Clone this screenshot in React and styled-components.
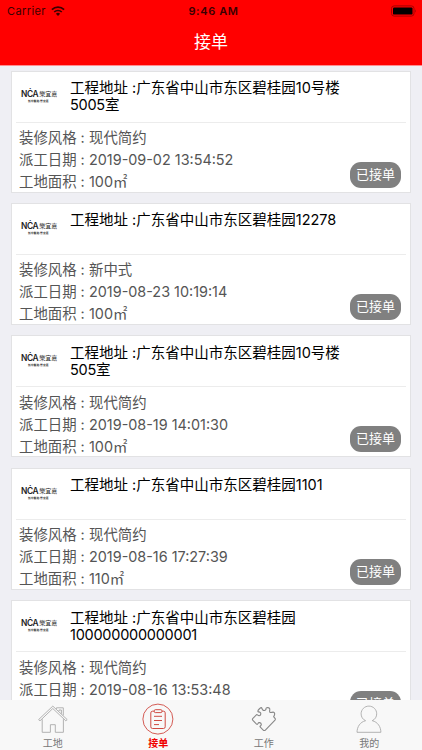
import React from 'react';
import styled, { createGlobalStyle } from 'styled-components';

const GlobalStyle = createGlobalStyle`
    * {
        box-sizing: border-box;
    }
    body {
        margin: 0;
        overflow: hidden;
        font-family: Inter, "Noto Sans CJK SC", sans-serif;
    }
`

const Screen = styled.div`
    display: flex;
    flex-direction: column;
    width: 422px;
    height: 750px;
    background: #efeff4;
`

const Header = styled.header`
    flex: none;
    height: 66px;
    background: #ff0000;
    border-bottom: 1px solid #ff8c8e;
`

const StatusBar = styled.div`
    display: grid;
    grid-template-columns: 1fr auto 1fr;
    align-items: center;
    height: 22px;
    padding: 0 5px 0 7px;
    font-size: 11px;
    line-height: 22px;
    color: #3a0000;
`

const Carrier = styled.div`
    display: flex;
    align-items: center;
    gap: 5px;
    letter-spacing: 0.4px;
`

const Time = styled.div`
    padding-left: 3px;
    font-weight: 600;
    letter-spacing: 0.6px;
`

const Battery = styled.div`
    display: flex;
    justify-content: flex-end;
`

const Title = styled.h1`
    margin: 0;
    padding-top: 1px;
    font-size: 17px;
    font-weight: 400;
    line-height: 38px;
    text-align: center;
    color: #fff;
`

const List = styled.main`
    display: flex;
    flex: 1;
    flex-direction: column;
    gap: 10.4px;
    min-height: 0;
    padding: 4.5px 11px 0;
    overflow: hidden;
`

const Card = styled.article`
    flex: none;
    width: 400px;
    height: 122px;
    padding: 0 4px;
    background: #fff;
    border: 1px solid #e2e2e4;
`

const CardTop = styled.div`
    display: flex;
    height: 51px;
    border-bottom: 1px solid #ececec;
`

const Logo = styled.div`
    flex: none;
    width: 54px;
    padding: 17px 0 0 5px;
`

const Brand = styled.div`
    display: flex;
    align-items: center;
    gap: 1px;
    height: 10px;
    color: #222;
    white-space: nowrap;
`

const BrandLatin = styled.span`
    font-size: 8.4px;
    font-weight: 600;
    line-height: 10px;
    letter-spacing: -0.4px;
`

const BrandName = styled.span`
    font-size: 6px;
    line-height: 10px;
`

const Slogan = styled.div`
    padding-left: 7px;
    font-size: 2.8px;
    font-weight: 700;
    line-height: 4px;
    color: #333;
    white-space: nowrap;
`

const Address = styled.div`
    padding-top: 7.5px;
    font-size: 14.5px;
    line-height: 17.2px;
    color: #000;
`

const AddressLine = styled.div`
    letter-spacing: ${(props) => (props.$dense ? '-0.25px' : 'normal')};
`

const CardBody = styled.div`
    display: flex;
    justify-content: space-between;
    padding: 4.5px 5px 0 3px;
`

const Info = styled.div`
    font-size: 14.4px;
    line-height: 22px;
    color: #555;
`

const InfoRow = styled.div`
    display: flex;
`

const Label = styled.span`
    width: 70px;
    white-space: pre;
`

const Status = styled.div`
    align-self: flex-end;
    width: 51px;
    height: 26px;
    margin-bottom: 5.5px;
    border-radius: 11px;
    background: #808080;
    font-size: 13px;
    line-height: 25px;
    text-align: center;
    color: #fff;
`

const TabBar = styled.nav`
    display: grid;
    flex: none;
    grid-template-columns: repeat(4, 1fr);
    height: 50px;
    background: #f8f8f8;
`

const Tab = styled.div`
    display: flex;
    flex-direction: column;
    align-items: center;
    padding-top: 3px;
    font-size: 10px;
    font-weight: ${(props) => (props.$active ? 700 : 400)};
    line-height: 16px;
    color: ${(props) => (props.$active ? '#f00000' : '#777')};
`

const WifiIcon = () => (
    <svg width="14" height="10" viewBox="0 0 14 10" fill="none">
        <path d="M0.9 3.6A8.9 8.9 0 0 1 13.1 3.6" stroke="#3a0000" strokeWidth="1.8"/>
        <path d="M3.2 6A5.6 5.6 0 0 1 10.8 6" stroke="#3a0000" strokeWidth="1.7"/>
        <path d="M7 9.9L4.9 7.8A3 3 0 0 1 9.1 7.8Z" fill="#3a0000"/>
    </svg>
)

const BatteryIcon = () => (
    <svg width="26" height="12" viewBox="0 0 26 12">
        <rect x="0.5" y="0.9" width="22.5" height="10.2" rx="2.6" fill="none" stroke="#a50000"/>
        <rect x="2" y="2.4" width="19.5" height="7.2" rx="1.2" fill="#000"/>
        <path d="M24.2 4.3Q25.6 6 24.2 7.7Z" fill="#900000"/>
    </svg>
)

const HouseIcon = () => (
    <svg width="32" height="32" viewBox="0 1 32 32" fill="none" stroke="#aaa" strokeWidth="0.9">
        <path d="M1.6 17.6L15.8 4.1L30.2 17.6L28.8 18.8L15.8 6.5L3 18.8Z"/>
        <path d="M5.2 17.2V30.3H13.4V22.7H18.3V30.3H26.4V17.2M19.5 6.8V5.8H26.3V13.4M22 9.2V8H24.4V11.8"/>
    </svg>
)

const OrderIcon = () => (
    <svg width="32" height="32" viewBox="0 1 32 32" fill="none" stroke="#cf4a42" strokeWidth="1">
        <circle cx="15.9" cy="17.1" r="15" strokeWidth="0.9"/>
        <path d="M12.3 9.2H10.5Q8.8 9.2 8.8 10.9V24.8Q8.8 26.5 10.5 26.5H21.5Q23.2 26.5 23.2 24.8V10.9Q23.2 9.2 21.5 9.2H19.9"/>
        <rect x="12.3" y="7.7" width="7.6" height="2.9" rx="1"/>
        <path d="M12 14.3H20M12 18.5H20M12 22.6H17"/>
    </svg>
)

const PuzzleIcon = () => (
    <svg width="32" height="32" viewBox="0 1 32 32" fill="none" stroke="#888" strokeWidth="1.1" strokeLinejoin="round">
        <path d="M4.9 16.3L8.6 12.6C9.2 12 9.7 13.8 11.2 13.7C13 13.5 13.4 11 11.9 10.2C10.9 9.7 9.7 10.1 9.9 9C10 8 12.3 5.8 13.1 5.6C14.2 5.4 13.7 7.1 14.8 8C16.2 9.2 18.4 8.1 18 6.4C17.8 5.6 20.6 5.1 21.5 6.3C22.4 7.5 20.9 9.4 22 10.3C23.1 11.2 25 9.3 26.2 10.6C27.4 12 26.2 13.8 25.6 14.7L27 16.4Q27.7 17.3 27 18.1L17.6 27.8Q16.3 29.2 15 27.8L12.1 24.9C11.4 24.2 13.3 23.9 13.3 22.4C13.1 20.4 10.5 20 9.9 21.6C9.5 22.7 9 22.6 8.3 21.9L4.9 18.3Q3.9 17.3 4.9 16.3Z"/>
    </svg>
)

const PersonIcon = () => (
    <svg width="32" height="32" viewBox="0 1 32 32" fill="none" stroke="#aaa" strokeWidth="0.9">
        <path d="M12.6 18.7C9.6 17.4 8.1 14.7 8.1 11.8C8.1 7.5 11.6 4.1 15.9 4.1S23.7 7.5 23.7 11.8C23.7 14.7 22.2 17.4 19.2 18.7C24.8 20 27.8 24.8 27.9 30.3H4C4.1 24.8 7.1 20 12.6 18.7Z"/>
    </svg>
)

const orders = [
    { address: ['广东省中山市东区碧桂园10号楼', '5005室'], style: '现代简约', date: '2019-09-02 13:54:52', area: '100㎡' },
    { address: ['广东省中山市东区碧桂园12278'], style: '新中式', date: '2019-08-23 10:19:14', area: '100㎡' },
    { address: ['广东省中山市东区碧桂园10号楼', '505室'], style: '现代简约', date: '2019-08-19 14:01:30', area: '100㎡' },
    { address: ['广东省中山市东区碧桂园1101'], style: '现代简约', date: '2019-08-16 17:27:39', area: '110㎡' },
    { address: ['广东省中山市东区碧桂园', '100000000000001'], style: '现代简约', date: '2019-08-16 13:53:48', area: '100㎡' },
]

const tabs = [
    { name: '工地', Icon: HouseIcon },
    { name: '接单', Icon: OrderIcon, active: true },
    { name: '工作', Icon: PuzzleIcon },
    { name: '我的', Icon: PersonIcon },
]

const OrderCard = ({order}) => {
    const [first, second] = order.address
    return (
        <Card>
            <CardTop>
                <Logo>
                    <Brand>
                        <BrandLatin>NĊA</BrandLatin>
                        <BrandName>樂宜嘉</BrandName>
                    </Brand>
                    <Slogan>新中醫館·樂宜嘉</Slogan>
                </Logo>
                <Address>
                    <AddressLine>工程地址 :{first}</AddressLine>
                    {second && <AddressLine $dense>{second}</AddressLine>}
                </Address>
            </CardTop>
            <CardBody>
                <Info>
                    <InfoRow><Label>装修风格 : </Label>{order.style}</InfoRow>
                    <InfoRow><Label>派工日期 : </Label>{order.date}</InfoRow>
                    <InfoRow><Label>工地面积 : </Label>{order.area}</InfoRow>
                </Info>
                <Status>已接单</Status>
            </CardBody>
        </Card>
    )
}

const App = () => {
    return (
        <>
            <GlobalStyle/>
            <Screen>
                <Header>
                    <StatusBar>
                        <Carrier>Carrier <WifiIcon/></Carrier>
                        <Time>9:46 AM</Time>
                        <Battery><BatteryIcon/></Battery>
                    </StatusBar>
                    <Title>接单</Title>
                </Header>
                <List>
                    {orders.map((order) => (
                        <OrderCard key={order.date} order={order}/>
                    ))}
                </List>
                <TabBar>
                    {tabs.map(({name, Icon, active}) => (
                        <Tab key={name} $active={active}>
                            <Icon/>
                            {name}
                        </Tab>
                    ))}
                </TabBar>
            </Screen>
        </>
    )
}

export default App;
